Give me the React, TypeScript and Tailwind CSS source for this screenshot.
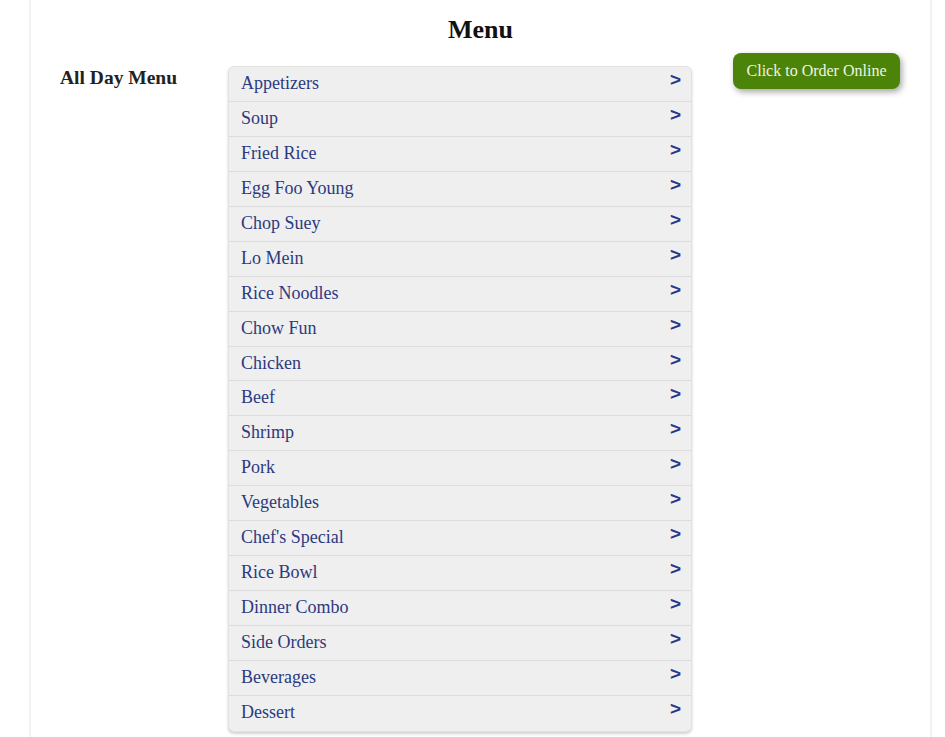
const CATEGORIES = [
  'Appetizers', 'Soup', 'Fried Rice', 'Egg Foo Young', 'Chop Suey', 'Lo Mein',
  'Rice Noodles', 'Chow Fun', 'Chicken', 'Beef', 'Shrimp', 'Pork', 'Vegetables',
  "Chef's Special", 'Rice Bowl', 'Dinner Combo', 'Side Orders', 'Beverages', 'Dessert',
]

export default function App() {
  return (
    <div className="min-h-screen bg-white font-['Liberation_Serif',serif] text-[#222]">
      <div className="ml-[29px] w-[903px] min-h-[737px] border-x-2 border-[#f2f2f2]">
        <h1 className="pt-[12px] text-center text-[26px] font-bold leading-[35px] text-[#111]">Menu</h1>

        <div className="mt-[19px] flex items-start">
          {/* left label */}
          <div className="w-[197px] pl-[29px] pt-px text-[19.5px] font-bold leading-[22px] text-[#222]">
            All Day Menu
          </div>

          {/* category list */}
          <ul className="w-[464px] overflow-hidden rounded-md border border-[#e2e2e2] bg-[#efefef] shadow-[0_2px_3px_rgba(0,0,0,0.18)]">
            {CATEGORIES.map((c, i) => (
              <li
                key={c}
                className={`relative h-[34.94px] pl-3 pt-[5px] text-[18px] leading-[22px] text-[#2c3a80] ${i < CATEGORIES.length - 1 ? 'border-b border-[#dcdcdc]' : ''}`}
              >
                {c}
                <span className="absolute right-[10px] top-[2px] font-['Liberation_Sans',sans-serif] text-[19px] font-bold leading-[22px] text-[#2a3788]">
                  &gt;
                </span>
              </li>
            ))}
          </ul>

          {/* order button */}
          <div className="ml-[41px] -mt-[13px]">
            <button className="h-[36px] w-[167px] rounded-lg bg-[#4b8409] text-[16px] leading-[20px] text-[#eef6e0] shadow-[2px_3px_6px_rgba(0,0,0,0.35)]">
              Click to Order Online
            </button>
          </div>
        </div>
      </div>
    </div>
  )
}
